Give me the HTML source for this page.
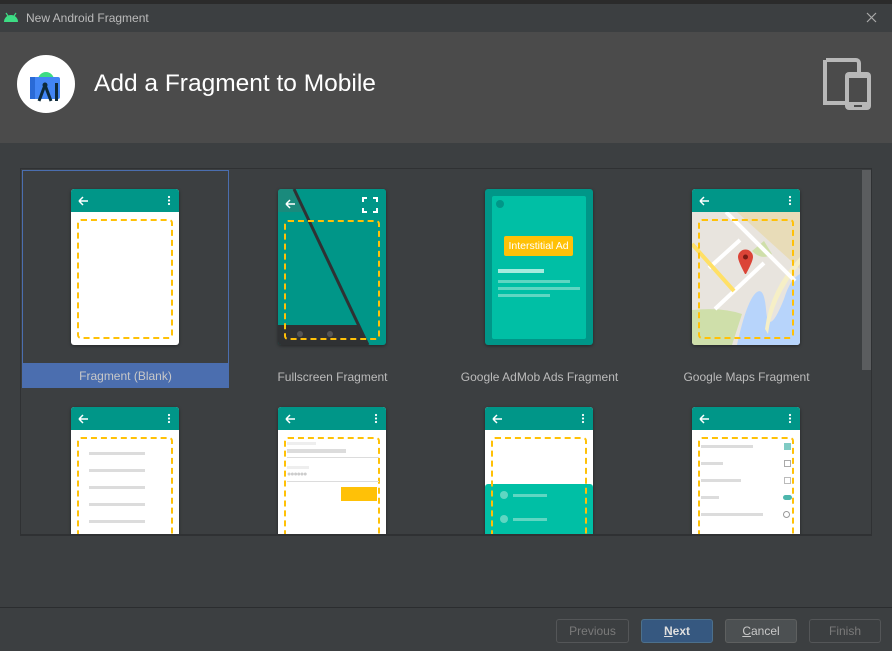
<!DOCTYPE html>
<html><head><meta charset="utf-8"><style>
*{margin:0;padding:0;box-sizing:border-box}
body{width:892px;height:651px;background:#3c3f41;position:relative;overflow:hidden;font-family:"Liberation Sans",sans-serif;color:#bbbbbb}
.abs{position:absolute}
.phone{position:absolute;width:108px;height:156px;background:#fff;border-radius:3px;overflow:hidden;box-shadow:0 1px 3px rgba(0,0,0,.4)}
.tb{position:absolute;left:0;top:0;width:108px;height:23px;background:#009688}
.dash{position:absolute;left:6px;top:30px;width:96px;height:120px;border:2px dashed #ffc107;border-radius:4px}
.lbl{position:absolute;width:207px;text-align:center;font-size:12px;color:#bbbbbb}
.btn{position:absolute;top:619px;height:24px;width:73px;border:1px solid #5e6060;border-radius:3px;font-size:12px;text-align:center;line-height:22px}
.gl{position:absolute;height:3px;background:#dcdcdc}
</style></head><body>
<div class="abs" style="left:0;top:0;width:892px;height:4px;background:#2b2b2b"></div>
<svg class="abs" style="left:3px;top:12px" width="16" height="10" viewBox="0 0 16 10"><path d="M1 10 A7 7 0 0 1 15 10Z" fill="#3ddc84"/><line x1="3" y1="1" x2="5" y2="4" stroke="#3ddc84" stroke-width="1.2"/><line x1="13" y1="1" x2="11" y2="4" stroke="#3ddc84" stroke-width="1.2"/></svg>
<div class="abs" style="left:26px;top:11px;font-size:12px;color:#bbbbbb">New Android Fragment</div>
<svg class="abs" style="left:866px;top:12px" width="11" height="11"><path d="M1 1L10 10M10 1L1 10" stroke="#aaa" stroke-width="1.2"/></svg>
<div class="abs" style="left:0;top:32px;width:892px;height:111px;background:#4b4b4b"></div>
<div class="abs" style="left:17px;top:55px;width:58px;height:58px;border-radius:50%;background:#fff"></div>
<svg class="abs" style="left:17px;top:55px" width="58" height="58" viewBox="0 0 58 58">
<path d="M21 25 A8 8 0 0 1 37 25Z" fill="#3ddc84"/>
<rect x="13" y="22" width="30" height="22" rx="2" fill="#4285f4"/>
<rect x="13" y="22" width="5" height="22" fill="#2a6ad6"/>
<path d="M28 30 L22 46 M28 30 L34 46" stroke="#0d2a3a" stroke-width="3"/><circle cx="28" cy="30" r="2.5" fill="#0d2a3a"/>
<rect x="38" y="28" width="3" height="18" fill="#0d2a3a"/>
</svg>
<div class="abs" style="left:94px;top:70px;font-size:24.5px;color:#ffffff">Add a Fragment to Mobile</div>
<svg class="abs" style="left:822px;top:58px" width="52" height="54" viewBox="0 0 52 54">
<path d="M4 2h30a3 3 0 0 1 3 3v12" stroke="#b8b8b8" stroke-width="4" fill="none"/>
<path d="M3 2v43h21" stroke="#b8b8b8" stroke-width="4" fill="none"/>
<rect x="23" y="14" width="26" height="38" rx="4" fill="#b8b8b8"/><rect x="27" y="20" width="18" height="24" fill="#4b4b4b"/><rect x="32" y="47" width="8" height="2" fill="#4b4b4b"/>
</svg>
<div class="abs" style="left:20px;top:168px;width:852px;height:368px;border:1px solid #2f3133;background:#3c3f41;overflow:hidden">
 <div class="abs" style="left:841px;top:1px;width:9px;height:200px;background:#5b5d5f"></div>
 <div class="abs" style="left:1px;top:1px;width:207px;height:218px;border:1px solid #4b6eaf"></div>
 <div class="abs" style="left:1px;top:194px;width:207px;height:25px;background:#4b6eaf"></div>
</div>
<div class="lbl" style="left:22px;top:369px;color:#c8c8c8">Fragment (Blank)</div>
<div class="lbl" style="left:229px;top:370px">Fullscreen Fragment</div>
<div class="lbl" style="left:436px;top:370px">Google AdMob Ads Fragment</div>
<div class="lbl" style="left:643px;top:370px">Google Maps Fragment</div>
<svg width="0" height="0" style="position:absolute"><defs>
<g id="tbi"><path d="M8 12h9M8 12l4-4M8 12l4 4" stroke="#fff" stroke-width="1.5" fill="none"/><circle cx="98" cy="8" r="1.1" fill="#fff"/><circle cx="98" cy="11.5" r="1.1" fill="#fff"/><circle cx="98" cy="15" r="1.1" fill="#fff"/></g>
</defs></svg>
<div class="phone" style="left:71px;top:189px"><div class="tb"></div><svg class="abs" width="108" height="23"><use href="#tbi"/></svg><div class="dash"></div></div>
<div class="phone" style="left:278px;top:189px;background:#009688">
<svg class="abs" width="108" height="156" viewBox="0 0 108 156">
<rect x="0" y="0" width="108" height="23" fill="#1a8a7c"/>
<rect x="0" y="136" width="108" height="20" fill="#2f3133"/>
<path d="M16 0L90 156H108V0Z" fill="#009688"/>
<path d="M16 0L90 156" stroke="#2f3133" stroke-width="3"/>
<path d="M8 15h9M8 15l4-4M8 15l4 4" stroke="#fff" stroke-width="1.5" fill="none"/>
<path d="M85 13V9h4M95 9h4v4M99 19v4h-4M89 23h-4v-4" stroke="#fff" stroke-width="2" fill="none"/>
<circle cx="22" cy="145" r="3" fill="#555"/><circle cx="52" cy="145" r="3" fill="#555"/>
</svg><div class="dash" style="top:31px;height:120px"></div></div>
<div class="phone" style="left:485px;top:189px;background:#009688">
<div class="abs" style="left:7px;top:7px;width:94px;height:143px;background:#00bfa5;border-radius:2px"></div>
<div class="abs" style="left:11px;top:11px;width:8px;height:8px;border-radius:50%;background:#009688"></div>
<div class="abs" style="left:19px;top:47px;width:69px;height:20px;background:#ffc107;border-radius:2px;color:#fff;font-size:10.5px;text-align:center;line-height:20px;white-space:nowrap">Interstitial Ad</div>
<div class="abs" style="left:13px;top:80px;width:46px;height:4px;background:#a6ebde"></div>
<div class="abs" style="left:13px;top:91px;width:72px;height:3px;background:#5fd6c2"></div>
<div class="abs" style="left:13px;top:98px;width:82px;height:3px;background:#5fd6c2"></div>
<div class="abs" style="left:13px;top:105px;width:52px;height:3px;background:#5fd6c2"></div>
</div>
<div class="phone" style="left:692px;top:189px;background:#e8e4de">
<svg class="abs" width="108" height="156" viewBox="0 0 108 156">
<path d="M45 23L108 80V23Z" fill="#e8dcb8"/>
<path d="M0 121Q30 118 50 125L40 156H0Z" fill="#cfdfaa"/>
<path d="M60 62L72 52L80 65Q70 72 60 62Z" fill="#cfdfaa"/>
<path d="M45 156Q55 110 65 103Q72 98 74 120Q76 150 92 110Q98 90 108 85V156Z" fill="#b7d4fb"/>
<path d="M76 145Q80 110 108 75V68Q78 100 73 140Z" fill="#f6efc6"/>
<path d="M34 23L103 92" stroke="#fff" stroke-width="4"/>
<path d="M23 120L72 74M17 79L48 51" stroke="#fff" stroke-width="4"/>
<path d="M0 55L42 102" stroke="#ffe066" stroke-width="4"/>
<path d="M53 85Q46 72 46 68A7.5 7.5 0 1 1 61 68Q61 72 54 85Z" fill="#db4437"/><circle cx="53.5" cy="68" r="2.5" fill="#7a1b14"/>
<rect x="0" y="0" width="108" height="23" fill="#009688"/><use href="#tbi"/>
</svg><div class="dash"></div></div>
<div class="phone" style="left:71px;top:407px;height:140px"><div class="tb"></div><svg class="abs" width="108" height="23"><use href="#tbi"/></svg><div class="dash"></div>
<div class="gl" style="left:18px;top:45px;width:56px"></div><div class="gl" style="left:18px;top:62px;width:56px"></div><div class="gl" style="left:18px;top:79px;width:56px"></div><div class="gl" style="left:18px;top:96px;width:56px"></div><div class="gl" style="left:18px;top:113px;width:56px"></div></div>
<div class="phone" style="left:278px;top:407px;height:140px"><div class="tb"></div><svg class="abs" width="108" height="23"><use href="#tbi"/></svg><div class="dash"></div>
<div class="gl" style="left:9px;top:35px;width:29px;background:#eee"></div><div class="gl" style="left:9px;top:42px;width:59px;height:4px"></div><div class="gl" style="left:9px;top:50px;width:92px;height:1px"></div>
<div class="gl" style="left:9px;top:59px;width:22px;background:#eee"></div><div class="abs" style="left:9px;top:64px;font-size:7px;color:#ccc;letter-spacing:-1px">●●●●●●</div><div class="gl" style="left:9px;top:74px;width:92px;height:1px"></div>
<div class="abs" style="left:63px;top:80px;width:36px;height:14px;background:#ffc107"></div></div>
<div class="phone" style="left:485px;top:407px;height:140px"><div class="tb"></div><svg class="abs" width="108" height="23"><use href="#tbi"/></svg>
<div class="abs" style="left:0;top:77px;width:108px;height:70px;background:#00bfa5;border-radius:3px 3px 0 0"></div>
<div class="abs" style="left:15px;top:84px;width:8px;height:8px;border-radius:50%;background:#5fd6c2"></div><div class="abs" style="left:28px;top:87px;width:34px;height:3px;background:#5fd6c2"></div>
<div class="abs" style="left:15px;top:108px;width:8px;height:8px;border-radius:50%;background:#5fd6c2"></div><div class="abs" style="left:28px;top:111px;width:34px;height:3px;background:#5fd6c2"></div>
<div class="dash"></div></div>
<div class="phone" style="left:692px;top:407px;height:140px"><div class="tb"></div><svg class="abs" width="108" height="23"><use href="#tbi"/></svg><div class="dash"></div>
<div class="gl" style="left:9px;top:38px;width:52px"></div><div class="abs" style="left:92px;top:36px;width:7px;height:7px;background:#80cbc4"></div>
<div class="gl" style="left:9px;top:55px;width:22px"></div><div class="abs" style="left:92px;top:53px;width:7px;height:7px;border:1px solid #aaa"></div>
<div class="gl" style="left:9px;top:72px;width:40px"></div><div class="abs" style="left:92px;top:70px;width:7px;height:7px;border:1px solid #bbb"></div>
<div class="gl" style="left:9px;top:89px;width:18px"></div><div class="abs" style="left:91px;top:88px;width:9px;height:5px;border-radius:3px;background:#4db6ac"></div>
<div class="gl" style="left:9px;top:106px;width:62px"></div><div class="abs" style="left:91px;top:104px;width:7px;height:7px;border-radius:50%;border:1px solid #999;background:#fff"></div></div>
<div class="abs" style="left:0;top:536px;width:892px;height:115px;background:#3c3f41"></div>
<div class="abs" style="left:20px;top:534px;width:852px;height:2px;background:#2f3133"></div>
<div class="abs" style="left:0;top:607px;width:892px;height:1px;background:#2b2d2f"></div>
<div class="btn" style="left:556px;color:#7a7a7a;border-color:#545658">Previous</div>
<div class="btn" style="left:641px;width:72px;background:#365880;border-color:#4c708c;color:#dfdfdf;font-weight:bold"><u>N</u>ext</div>
<div class="btn" style="left:725px;width:72px;background:#4c5052;color:#c8c8c8"><u>C</u>ancel</div>
<div class="btn" style="left:809px;width:72px;color:#7a7a7a;border-color:#545658">Finish</div>
</body></html>
